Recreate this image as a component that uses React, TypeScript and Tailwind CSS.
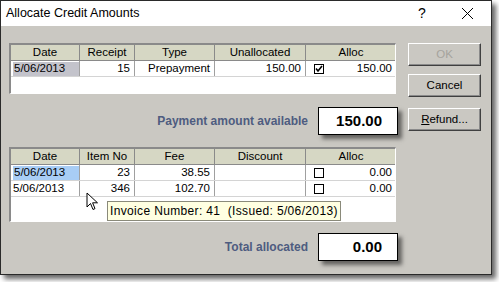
import React from "react";

const FONT = { fontFamily: '"Liberation Sans", Arial, sans-serif' };

type Cell = { text: string; align?: "left" | "right" | "center"; sel?: string; check?: boolean | null };

function Header({ cols }: { cols: string[] }) {
  return (
    <div className="grid grid-cols-[69px_55px_80px_91px_90px] h-[16px] bg-[#d6d7c4] border-b border-[#8a8a8a]">
      {cols.map((c, i) => (
        <div
          key={c}
          className={
            "flex items-center justify-center text-[11.5px] leading-none text-black " +
            (i < cols.length - 1 ? "border-r border-[#8a8a8a]" : "")
          }
        >
          {c}
        </div>
      ))}
    </div>
  );
}

function CheckBox({ checked }: { checked: boolean }) {
  return (
    <div className="w-[10px] h-[10px] border border-black bg-white flex items-center justify-center">
      {checked && (
        <svg width="8" height="8" viewBox="0 0 8 8">
          <path d="M1 3.5 L3 6 L7 1" stroke="black" strokeWidth="1.6" fill="none" />
        </svg>
      )}
    </div>
  );
}

function Row({ cells }: { cells: Cell[] }) {
  return (
    <div className="grid grid-cols-[69px_55px_80px_91px_90px] h-[16px] border-b border-[#d4d4d4]">
      {cells.map((c, i) => (
        <div
          key={i}
          className={
            "flex items-center text-[11.5px] leading-none text-black overflow-hidden " +
            (i < cells.length - 1 ? "border-r border-[#a0a0a0] " : "") +
            (c.align === "right" ? "justify-end pr-[4px] " : c.align === "center" ? "justify-center " : "pl-[2px] ")
          }
        >
          {c.check !== undefined && c.check !== null ? (
            <div className="flex w-full items-center justify-between pl-[6px] pr-[4px]">
              <CheckBox checked={c.check} />
              <span>{c.text}</span>
            </div>
          ) : (
            <span className={c.sel ? `${c.sel} w-[66px] h-[14px] flex items-center pl-[1px]` : ""}>{c.text}</span>
          )}
        </div>
      ))}
    </div>
  );
}

function Button({ children, disabled }: { children: React.ReactNode; disabled?: boolean }) {
  return (
    <div className="w-[73px] h-[23px] bg-[#cac8c2] border border-t-white border-l-white border-r-[#404040] border-b-[#404040] shadow-[inset_-1px_-1px_0_#8a8a8a] flex items-center justify-center text-[11.5px]">
      <span className={disabled ? "text-[#a5a39d]" : "text-black"}>{children}</span>
    </div>
  );
}

function ValueBox({ value }: { value: string }) {
  return (
    <div className="w-[80px] h-[28px] bg-white border border-black shadow-[4px_4px_4px_rgba(0,0,0,0.5)] flex items-center justify-end pr-[15px] text-[15px] font-bold text-black">
      {value}
    </div>
  );
}

export default function App() {
  return (
    <div className="w-[499px] h-[282px] bg-white relative" style={FONT}>
      <div className="w-[492px] h-[275px] border border-[#2a2a2a] flex flex-col shadow-[4px_4px_5px_rgba(0,0,0,0.6)]">
        {/* Title bar */}
        <div className="h-[25px] bg-white flex items-center justify-between pl-[5px]">
          <span className="text-[12.5px] text-black">Allocate Credit Amounts</span>
          <div className="flex items-center">
            <span className="text-[14px] text-black w-[46px] text-center">?</span>
            <svg width="46" height="24" viewBox="0 0 46 24">
              <path d="M17 6 L28 17 M28 6 L17 17" stroke="black" strokeWidth="1" />
            </svg>
          </div>
        </div>
        {/* Body */}
        <div className="flex-1 bg-[#cac8c2] flex gap-[12px] pl-[8px] pt-[17px]">
          <div className="w-[387px] flex flex-col">
            <div className="h-[51px] bg-white border-t-2 border-l-2 border-[#8a8a8a] border-r border-b border-r-white border-b-white">
              <Header cols={["Date", "Receipt", "Type", "Unallocated", "Alloc"]} />
              <Row
                cells={[
                  { text: "5/06/2013", sel: "bg-[#c3c3cb]" },
                  { text: "15", align: "right" },
                  { text: "Prepayment", align: "right" },
                  { text: "150.00", align: "right" },
                  { text: "150.00", check: true },
                ]}
              />
            </div>
            <div className="flex items-center justify-end gap-[10px] mt-[13px] mr-[-2px]">
              <span className="text-[12px] font-bold text-[#4e5c80]">Payment amount available</span>
              <ValueBox value="150.00" />
            </div>
            <div className="h-[75px] mt-[12px] bg-white border-t-2 border-l-2 border-[#8a8a8a] border-r border-b border-r-white border-b-white">
              <Header cols={["Date", "Item No", "Fee", "Discount", "Alloc"]} />
              <Row
                cells={[
                  { text: "5/06/2013", sel: "bg-[#a8cdf5]" },
                  { text: "23", align: "right" },
                  { text: "38.55", align: "right" },
                  { text: "", align: "right" },
                  { text: "0.00", check: false },
                ]}
              />
              <Row
                cells={[
                  { text: "5/06/2013" },
                  { text: "346", align: "right" },
                  { text: "102.70", align: "right" },
                  { text: "", align: "right" },
                  { text: "0.00", check: false },
                ]}
              />
            </div>
            <div className="flex items-center justify-end gap-[10px] mt-[11px] mr-[-2px]">
              <span className="text-[12px] font-bold text-[#4e5c80]">Total allocated</span>
              <ValueBox value="0.00" />
            </div>
          </div>
          <div className="flex flex-col gap-[8px]">
            <Button disabled>OK</Button>
            <Button>Cancel</Button>
            <div className="mt-[3px]">
              <Button>
                <span className="underline">R</span>efund...
              </Button>
            </div>
          </div>
        </div>
      </div>
      {/* Tooltip */}
      <div className="absolute left-[107px] top-[201px] h-[20px] w-[234px] px-[2px] bg-[#ffffe1] border border-[#8a8a7a] flex items-center text-[12px] tracking-[0.35px] text-black whitespace-pre">
        {"Invoice Number: 41  (Issued: 5/06/2013)"}
      </div>
      {/* Mouse cursor */}
      <svg className="absolute left-[86px] top-[192px]" width="13" height="20" viewBox="0 0 13 20">
        <path d="M1 1 L1 15 L4.5 11.5 L7 17.5 L9 16.6 L6.6 10.8 L11.5 10.8 Z" fill="white" stroke="black" strokeWidth="1" />
      </svg>
    </div>
  );
}
